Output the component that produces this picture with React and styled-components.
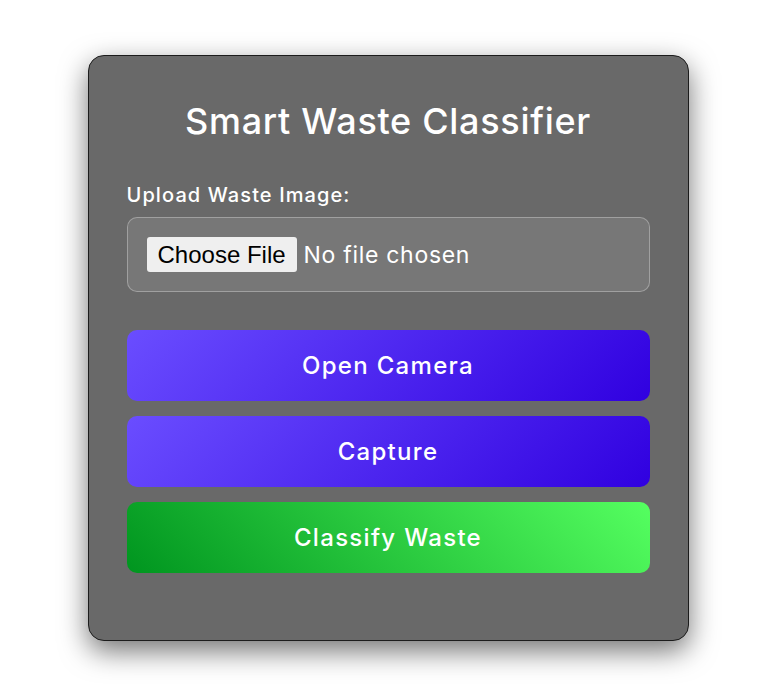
import React from 'react';
import styled, { createGlobalStyle } from 'styled-components';

const GlobalStyle = createGlobalStyle`
  html, body {
    margin: 0;
    padding: 0;
    background: #ffffff;
  }
  body {
    font-family: "Inter", "Noto Sans", sans-serif;
  }
`;

const Page = styled.div`
  min-height: 687px;
  display: flex;
  justify-content: center;
  align-items: flex-start;
  padding: 55px 0 0 2px;
  box-sizing: border-box;
`;

const Card = styled.div`
  width: 601px;
  box-sizing: border-box;
  padding: 40px 38px 67px;
  background: #696969;
  border: 1px solid #1c1c1c;
  border-radius: 16px;
  box-shadow: 0 10px 28px rgba(0, 0, 0, 0.55);
  color: #fff;
`;

const Title = styled.h1`
  margin: 0 0 37px;
  text-align: center;
  font-size: 36px;
  font-weight: 500;
  letter-spacing: 0.7px;
  line-height: 50px;
`;

const Label = styled.label`
  display: block;
  font-size: 20px;
  font-weight: 500;
  letter-spacing: 1.1px;
  line-height: 24px;
  margin-bottom: 10px;
`;

const FileBox = styled.div`
  display: flex;
  align-items: center;
  height: 75px;
  box-sizing: border-box;
  padding: 0 19px;
  background: #777777;
  border: 1px solid rgba(255, 255, 255, 0.3);
  border-radius: 10px;
  margin-bottom: 38px;
`;

const FileInput = styled.input`
  font-family: "Inter", sans-serif;
  font-size: 23px;
  letter-spacing: 0.7px;
  color: #fff;

  &::file-selector-button {
    font-family: "Liberation Sans", Arial, sans-serif;
    font-size: 24px;
    letter-spacing: 0;
    color: #000;
    background: #efefef;
    border: none;
    border-radius: 3px;
    height: 35px;
    padding: 0 11px;
    margin-right: 7px;
  }
`;

const Actions = styled.div`
  display: flex;
  flex-direction: column;
  gap: 15px;
`;

const Button = styled.button`
  height: 71px;
  border: none;
  border-radius: 10px;
  font-family: "Inter", sans-serif;
  font-size: 24px;
  font-weight: 500;
  letter-spacing: 1.3px;
  color: #fff;
  cursor: pointer;
  background: ${(props) =>
    props.green
      ? 'linear-gradient(45deg, #00951f, #55ff60)'
      : 'linear-gradient(135deg, #6a4dff, #3000e0)'};
`;

export default function App() {
  return (
    <>
      <GlobalStyle />
      <Page>
        <Card>
          <Title>Smart Waste Classifier</Title>
          <Label htmlFor="waste">Upload Waste Image:</Label>
          <FileBox>
            <FileInput id="waste" type="file" accept="image/*" />
          </FileBox>
          <Actions>
            <Button>Open Camera</Button>
            <Button>Capture</Button>
            <Button green>Classify Waste</Button>
          </Actions>
        </Card>
      </Page>
    </>
  );
}
